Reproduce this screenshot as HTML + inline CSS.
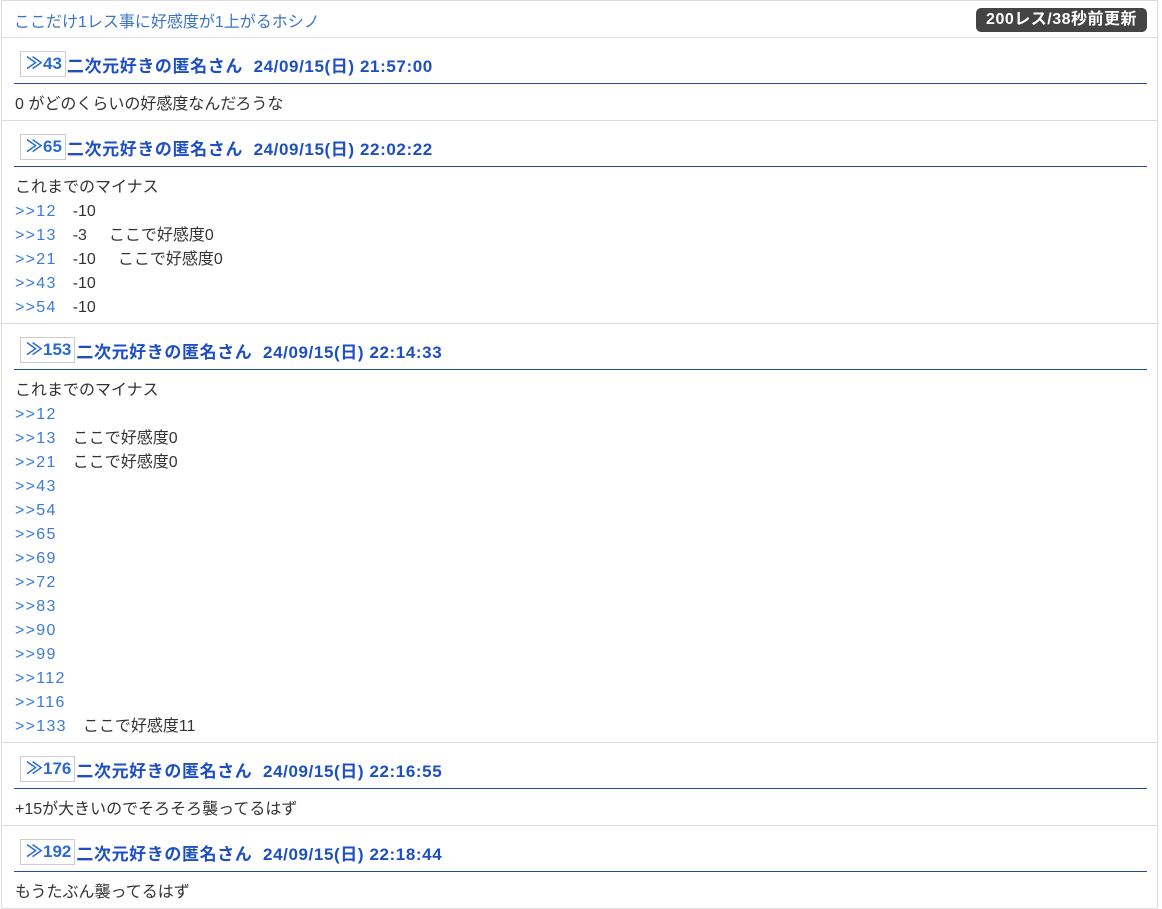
<!DOCTYPE html>
<html><head><meta charset="utf-8"><style>
*{margin:0;padding:0;box-sizing:border-box}
body{width:1162px;height:908px;overflow:hidden;background:#fff;font-family:"Liberation Sans","Noto Sans CJK JP",sans-serif;font-size:16px;color:#333}
.wrap{position:absolute;left:1px;top:0;width:1157px;height:908px;border-left:1px solid #ddd;border-right:1px solid #ddd;border-top:1px solid #ddd}
.top{height:37px;position:relative;border-bottom:1px solid #ddd}
.top .t{position:absolute;left:12px;top:7px;color:#3a75c4;font-size:16px}
.top .b{position:absolute;right:10px;top:7px;background:#444;color:#fff;font-weight:bold;font-size:16px;letter-spacing:0.5px;border-radius:5px;padding:0 10px;height:24px;line-height:24px}
.post{border-bottom:1px solid #ddd;padding:13px 10px 3px 12px}
.hd{height:26px;position:relative;padding-left:6px;display:flex;align-items:center;color:#1e4fc2;font-weight:bold;font-size:17px;letter-spacing:0.6px;white-space:pre}
.num{display:inline-block;border:1px solid #ccc;height:26px;line-height:24px;padding:0 3px 0 5px;color:#2a6bd0;margin-right:1px;letter-spacing:0}
.line{height:7px;border-bottom:1px solid #1f4e9c;width:1133px}
.bd{line-height:24px;padding-left:1px;padding-top:9px;white-space:pre}
.bd a{color:#3a7bd5;text-decoration:none;letter-spacing:1.3px}
.s{display:inline-block;width:16px}
.s2{display:inline-block;width:22px}
</style></head><body><div class="wrap">
<div class="top"><span class="t">ここだけ1レス事に好感度が1上がるホシノ</span><span class="b">200レス/38秒前更新</span></div>
<div class="post"><div class="hd"><span class="num">≫43</span>二次元好きの匿名さん  24/09/15(日) 21:57:00</div><div class="line"></div>
<div class="bd">0 がどのくらいの好感度なんだろうな</div></div>
<div class="post"><div class="hd"><span class="num">≫65</span>二次元好きの匿名さん  24/09/15(日) 22:02:22</div><div class="line"></div>
<div class="bd">これまでのマイナス
<a>&gt;&gt;12</a><span class="s"></span>-10
<a>&gt;&gt;13</a><span class="s"></span>-3<span class="s2"></span>ここで好感度0
<a>&gt;&gt;21</a><span class="s"></span>-10<span class="s2"></span>ここで好感度0
<a>&gt;&gt;43</a><span class="s"></span>-10
<a>&gt;&gt;54</a><span class="s"></span>-10</div></div>
<div class="post"><div class="hd"><span class="num">≫153</span>二次元好きの匿名さん  24/09/15(日) 22:14:33</div><div class="line"></div>
<div class="bd">これまでのマイナス
<a>&gt;&gt;12</a>
<a>&gt;&gt;13</a><span class="s"></span>ここで好感度0
<a>&gt;&gt;21</a><span class="s"></span>ここで好感度0
<a>&gt;&gt;43</a>
<a>&gt;&gt;54</a>
<a>&gt;&gt;65</a>
<a>&gt;&gt;69</a>
<a>&gt;&gt;72</a>
<a>&gt;&gt;83</a>
<a>&gt;&gt;90</a>
<a>&gt;&gt;99</a>
<a>&gt;&gt;112</a>
<a>&gt;&gt;116</a>
<a>&gt;&gt;133</a><span class="s"></span>ここで好感度11</div></div>
<div class="post"><div class="hd"><span class="num">≫176</span>二次元好きの匿名さん  24/09/15(日) 22:16:55</div><div class="line"></div>
<div class="bd">+15が大きいのでそろそろ襲ってるはず</div></div>
<div class="post"><div class="hd"><span class="num">≫192</span>二次元好きの匿名さん  24/09/15(日) 22:18:44</div><div class="line"></div>
<div class="bd">もうたぶん襲ってるはず</div></div>
</div></body></html>
